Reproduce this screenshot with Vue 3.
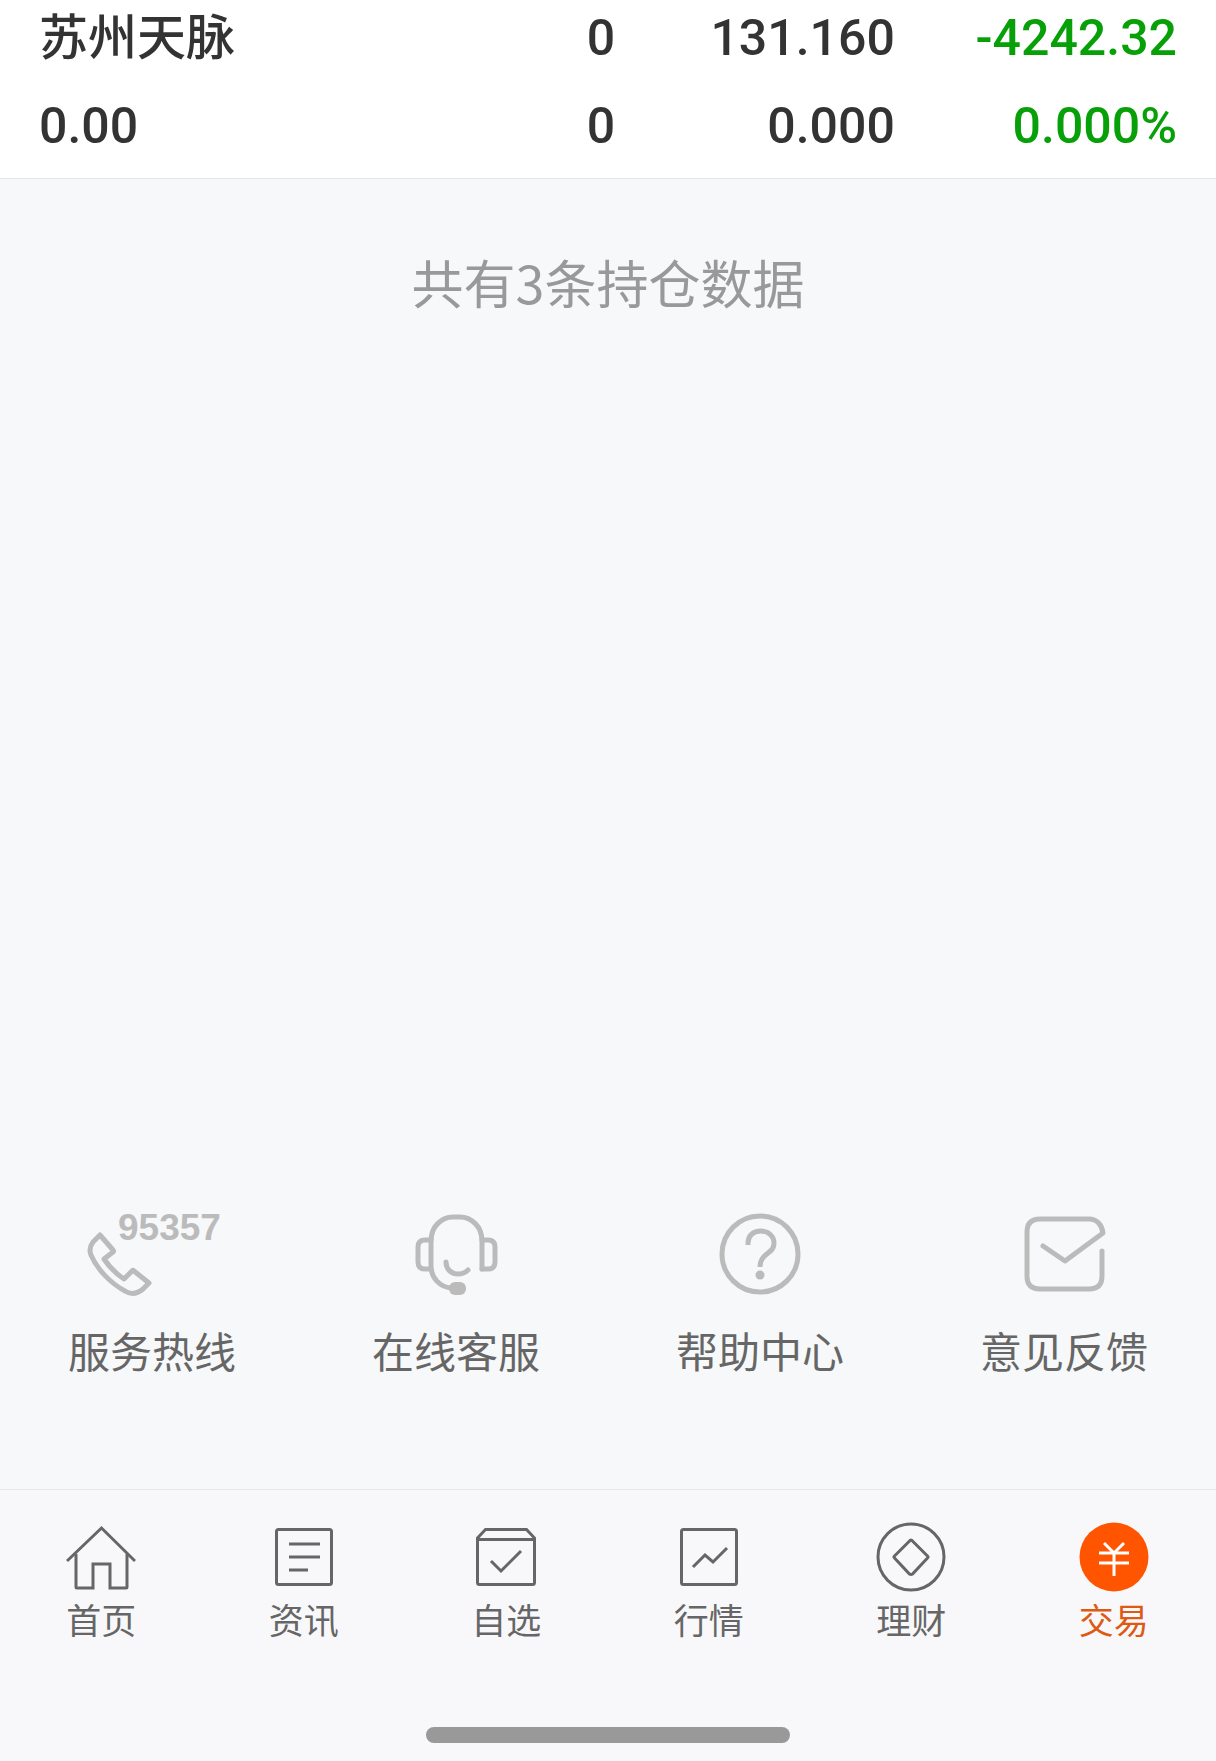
<template>
  <div class="page">
    <main class="content">
      <table class="holding" aria-label="持仓">
        <tbody>
          <tr v-for="(row, index) in holdingRows" :key="index">
            <td
              v-for="(cell, i) in row"
              :key="i"
              :class="{ down: i === 3 }"
            >{{ cell }}</td>
          </tr>
        </tbody>
      </table>

      <p class="summary">共有{{ holdingCount }}条持仓数据</p>

      <section class="services">
        <button v-for="item in services" :key="item.id" type="button" class="service">
          <svg v-if="item.id === 'hotline'" class="service-icon wide" viewBox="0 0 144 84" aria-hidden="true">
            <path d="M20 23L33 38Q34 39 33 40L24 47Q32 59 44 67L52 59Q53 58 54 59L69 71L63 77C57 82 51 83 45 79C32 72 18 59 11 43C9 38 10 34 13 30Z" />
            <text class="hotline-number" x="38" y="28">95357</text>
          </svg>
          <svg v-else-if="item.id === 'online'" class="service-icon" viewBox="0 0 84 84" aria-hidden="true">
            <path d="M68 57V29C68 14 57 5 46 5H39C28 5 17 14 17 29V54C17 66 26 75 37 76" />
            <path d="M17 28H11Q4 28 4 35V50Q4 57 11 57H17" />
            <path d="M68 28H74Q81 28 81 35V50Q81 57 74 57H68" />
            <path d="M32 50C32 57 37 62 44 62Q50 62 54 58" />
            <rect class="solid" x="35" y="70" width="17" height="13" rx="6" />
          </svg>
          <svg v-else-if="item.id === 'help'" class="service-icon" viewBox="0 0 84 84" aria-hidden="true">
            <circle cx="42" cy="42" r="38" />
            <path class="butt" d="M30 33V31C30 24 35 19 42.5 19C50 19 56 24 56 31C56 36 54 38 50 41C45 45 42 48 42 55" />
            <circle class="solid" cx="42" cy="63" r="4.5" />
          </svg>
          <svg v-else class="service-icon" viewBox="0 0 84 84" aria-hidden="true">
            <path d="M80 39V64Q80 77 67 77H18Q5 77 5 64V20Q5 7 18 7H67C75 7 80 13 81 21L43 49L21 34" />
          </svg>
          <span class="service-label">{{ item.label }}</span>
        </button>
      </section>
    </main>

    <footer class="footer">
      <nav class="tabs">
        <a
          v-for="tab in tabs"
          :key="tab.id"
          :href="'#' + tab.id"
          :class="['tab', { active: tab.id === activeTab }]"
          @click.prevent="activeTab = tab.id"
        >
          <svg class="tab-icon" viewBox="0 0 70 70" aria-hidden="true">
            <template v-if="tab.id === 'home'">
              <path d="M1 39L35.5 6L69 39" />
              <path d="M10 32V65Q10 66 11 66H27V42H44V66H60Q61 66 61 65V32" />
            </template>
            <template v-else-if="tab.id === 'news'">
              <rect x="7.5" y="7.5" width="55" height="55" rx="2" />
              <path d="M20 22H51M20 35H51M20 48H39" />
            </template>
            <template v-else-if="tab.id === 'watchlist'">
              <path d="M6.5 16L14.5 7.5H55.5L63.5 16V60.5Q63.5 62.5 61.5 62.5H8.5Q6.5 62.5 6.5 60.5ZM6.5 17.5H63.5" />
              <path d="M20 39L30 49L50 29" />
            </template>
            <template v-else-if="tab.id === 'market'">
              <rect x="7.5" y="7.5" width="55" height="55" rx="2" />
              <path d="M19 45L31 33L39 40L53 26" />
            </template>
            <template v-else-if="tab.id === 'wealth'">
              <circle cx="35" cy="35" r="33" />
              <path d="M33.5 19Q35 17 36.5 19L51.5 34Q52.5 35 51.5 36L36.5 52Q35 53 33.5 52L18.5 36Q17.5 35 18.5 34Z" />
            </template>
            <template v-else>
              <circle class="coin" cx="35" cy="35" r="34.5" />
              <path class="yen" d="M25 21L35 31L45 21M20 31H50M20 41H50M35 31V54" />
            </template>
          </svg>
          <span class="tab-label">{{ tab.label }}</span>
        </a>
      </nav>
      <div class="home-indicator"></div>
    </footer>
  </div>
</template>

<script setup>
import { ref } from 'vue'

// 持仓
const holdingCount = ref(3)
const holdingRows = ref([
  ['苏州天脉', '0', '131.160', '-4242.32'],
  ['0.00', '0', '0.000', '0.000%']
])

// 服务入口
const services = [
  { id: 'hotline', label: '服务热线' },
  { id: 'online', label: '在线客服' },
  { id: 'help', label: '帮助中心' },
  { id: 'feedback', label: '意见反馈' }
]

// 底部导航
const tabs = [
  { id: 'home', label: '首页' },
  { id: 'news', label: '资讯' },
  { id: 'watchlist', label: '自选' },
  { id: 'market', label: '行情' },
  { id: 'wealth', label: '理财' },
  { id: 'trade', label: '交易' }
]
const activeTab = ref('trade')
</script>

<style>
body {
  margin: 0;
  background: #f7f8fa;
}
</style>

<style scoped>
.page {
  display: flex;
  flex-direction: column;
  min-height: 100vh;
  font-family: "Noto Sans CJK SC", sans-serif;
  color: #666;
  background: #f7f8fa;
}

.content {
  flex: 1;
  display: flex;
  flex-direction: column;
}

/* 持仓 */
.holding {
  width: 100%;
  table-layout: fixed;
  border-spacing: 0;
  background: #fff;
  border-bottom: 1px solid #e6e6e6;
}

.holding td {
  width: 23%;
  box-sizing: border-box;
  padding: 0 5px 11px 0;
  font-family: Roboto, "Noto Sans CJK SC", sans-serif;
  font-size: 50px;
  font-weight: 500;
  line-height: 76px;
  color: #333;
  text-align: right;
  vertical-align: baseline;
  white-space: nowrap;
}

.holding tr:last-child td {
  padding-bottom: 14px;
}

.holding td:first-child {
  width: 27%;
  padding-left: 39px;
  text-align: left;
}

.holding td:nth-child(2) {
  width: 24%;
}

.holding td:last-child {
  width: 26%;
  padding-right: 39px;
}

.holding tr:first-child td:first-child {
  font-size: 49px;
}

.holding td.down {
  color: #08a008;
}

.summary {
  margin: 67px 0;
  font-size: 52px;
  line-height: 72px;
  text-align: center;
  color: #999;
}

/* 服务入口 */
.services {
  display: grid;
  grid-template-columns: repeat(4, 1fr);
  margin-top: auto;
  padding-bottom: 109px;
}

.service {
  display: flex;
  flex-direction: column;
  align-items: center;
  gap: 24px;
  padding: 0;
  border: 0;
  background: none;
  font-family: inherit;
  color: inherit;
  cursor: pointer;
}

.service-icon {
  width: 84px;
  height: 84px;
  overflow: visible;
  fill: none;
  stroke: #bbb;
  stroke-width: 5;
  stroke-linecap: round;
  stroke-linejoin: round;
}

.service-icon.wide {
  width: 144px;
}

.service-icon .butt {
  stroke-linecap: butt;
}

.service-icon .solid,
.hotline-number {
  fill: #bbb;
  stroke: none;
}

.hotline-number {
  font-family: "Liberation Sans", sans-serif;
  font-size: 37px;
  font-weight: 700;
}

.service-label {
  font-size: 42px;
  line-height: 60px;
}

/* 底部导航 */
.footer {
  padding: 32px 0 18px;
  border-top: 1px solid #e8e8ea;
  background: #f8f8fa;
}

.tabs {
  display: grid;
  grid-template-columns: repeat(6, 1fr);
  padding-right: 1px;
}

.tab {
  display: flex;
  flex-direction: column;
  align-items: center;
  gap: 5px;
  color: #666;
  text-decoration: none;
}

.tab-icon {
  width: 70px;
  height: 70px;
  fill: none;
  stroke: #666;
  stroke-width: 3;
}

.tab-icon .coin {
  fill: #ff5500;
  stroke: none;
}

.tab-icon .yen {
  stroke: #fff;
}

.tab-label {
  font-size: 35px;
  line-height: 44px;
}

.tab.active {
  color: #dd5a14;
}

.home-indicator {
  width: 30%;
  height: 16px;
  margin: 86px auto 0;
  border-radius: 8px;
  background: #999;
}
</style>
